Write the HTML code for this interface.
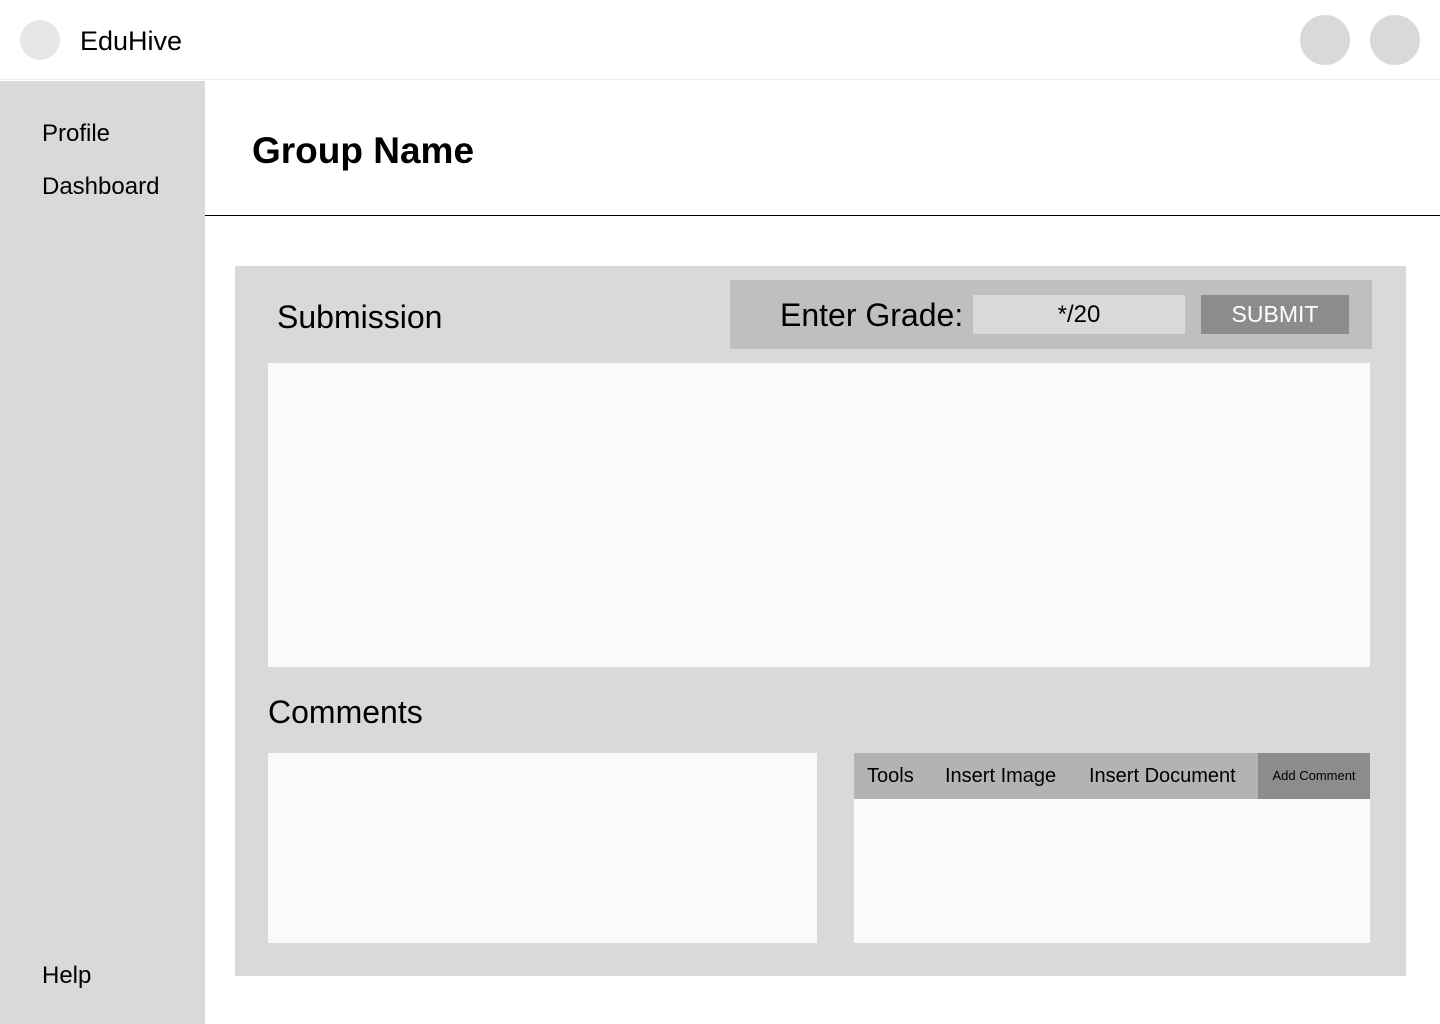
<!DOCTYPE html>
<html><head><style>
*{margin:0;padding:0;box-sizing:border-box}
body{width:1440px;height:1024px;position:relative;background:#fff;font-family:"Liberation Sans",sans-serif;overflow:hidden;color:#000}
div{position:absolute}
.t{white-space:nowrap;line-height:1}
</style></head><body>
<div style="left:0;top:0;width:1440px;height:80px;background:#fff;border-bottom:1px solid #eee"></div>
<div style="left:20px;top:20px;width:40px;height:40px;border-radius:50%;background:#e6e6e6"></div>
<div class="t" style="left:80px;top:28px;font-size:27px">EduHive</div>
<div style="left:1300px;top:15px;width:50px;height:50px;border-radius:50%;background:#d9d9d9"></div>
<div style="left:1370px;top:15px;width:50px;height:50px;border-radius:50%;background:#d9d9d9"></div>
<div style="left:0;top:81px;width:205px;height:943px;background:#d9d9d9"></div>
<div class="t" style="left:42px;top:122px;font-size:24px">Profile</div>
<div class="t" style="left:42px;top:175px;font-size:24px">Dashboard</div>
<div class="t" style="left:42px;top:964px;font-size:24px">Help</div>
<div class="t" style="left:252px;top:132px;font-size:37px;font-weight:bold">Group Name</div>
<div style="left:205px;top:215px;width:1235px;height:1px;background:#000"></div>
<div style="left:235px;top:266px;width:1171px;height:710px;background:#d9d9d9"></div>
<div class="t" style="left:277px;top:301px;font-size:32px">Submission</div>
<div style="left:730px;top:280px;width:642px;height:69px;background:#bfbfbf"></div>
<div class="t" style="left:780px;top:299px;font-size:32px">Enter Grade:</div>
<div style="left:973px;top:295px;width:212px;height:39px;background:#d9d9d9;font-size:24px;text-align:center;line-height:39px">*/20</div>
<div style="left:1201px;top:295px;width:148px;height:39px;background:#8c8c8c;color:#fff;font-size:23px;text-align:center;line-height:39px">SUBMIT</div>
<div style="left:268px;top:363px;width:1102px;height:304px;background:#fafafa"></div>
<div class="t" style="left:268px;top:696px;font-size:32px">Comments</div>
<div style="left:268px;top:753px;width:549px;height:190px;background:#fafafa"></div>
<div style="left:854px;top:753px;width:516px;height:46px;background:#b3b3b3"></div>
<div class="t" style="left:867px;top:766px;font-size:20px">Tools</div>
<div class="t" style="left:945px;top:766px;font-size:20px">Insert Image</div>
<div class="t" style="left:1089px;top:766px;font-size:20px">Insert Document</div>
<div style="left:1258px;top:753px;width:112px;height:46px;background:#8c8c8c;font-size:13px;text-align:center;line-height:46px">Add Comment</div>
<div style="left:854px;top:799px;width:516px;height:144px;background:#fafafa"></div>
</body></html>
